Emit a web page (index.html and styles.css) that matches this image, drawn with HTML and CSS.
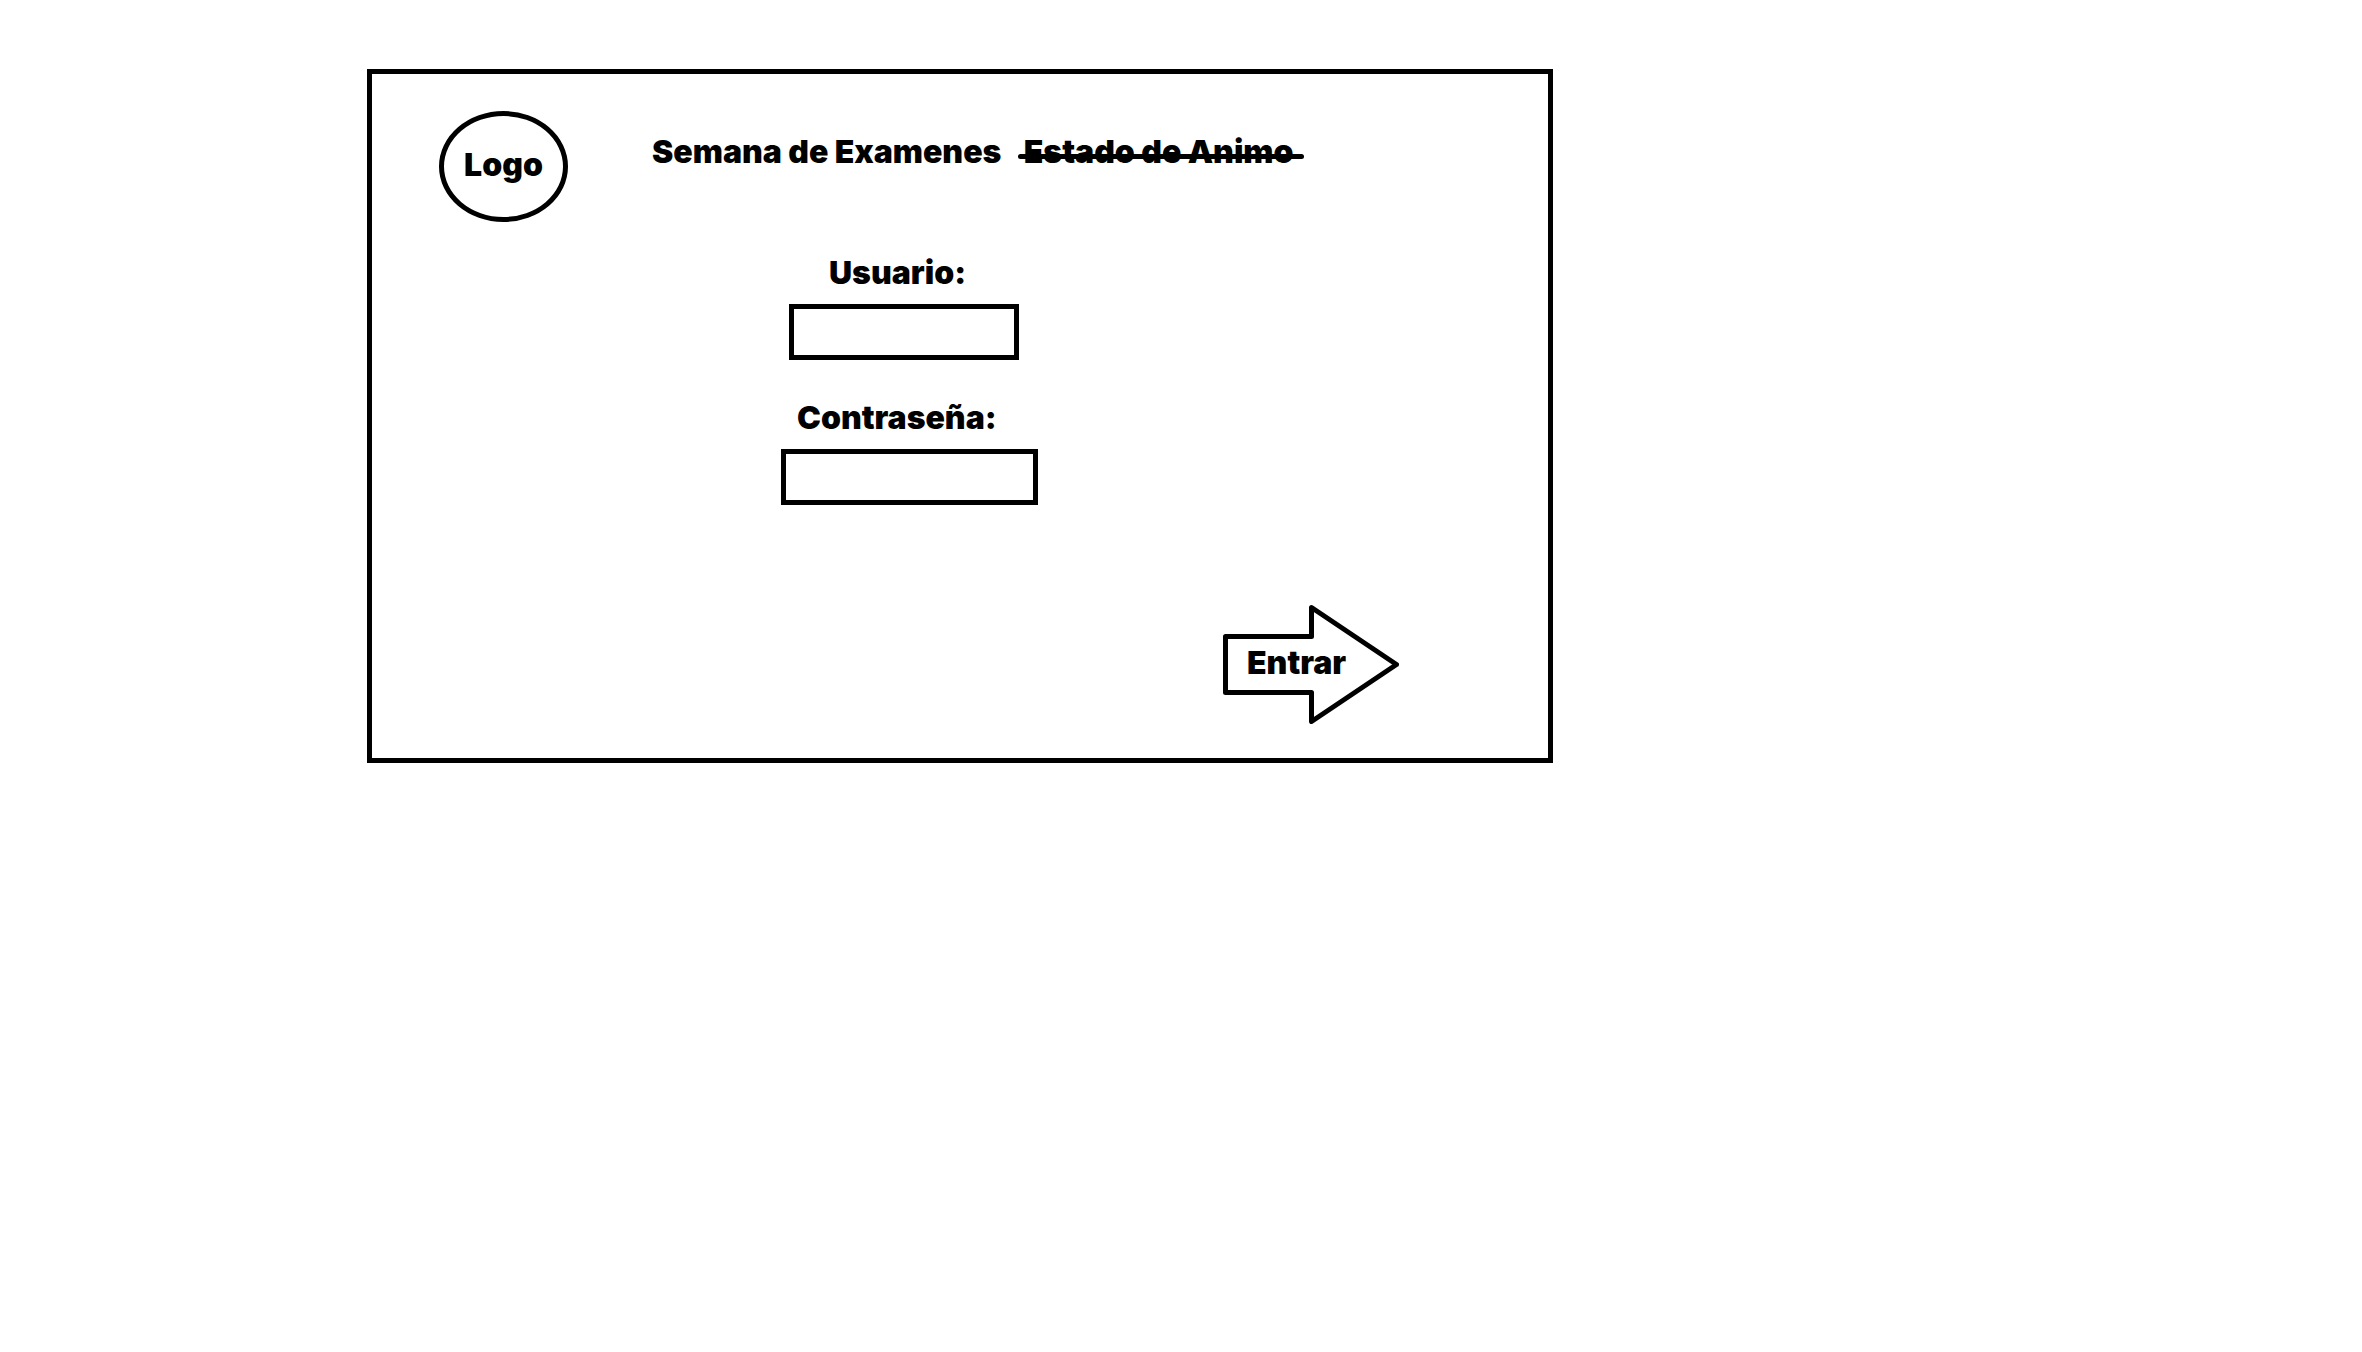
FILE: index.html
```html
<!DOCTYPE html>
<html lang="es">
<head>
<meta charset="utf-8">
<meta name="viewport" content="width=device-width, initial-scale=1">
<title>Semana de Examenes</title>
<link rel="stylesheet" href="styles.css">
</head>
<body>
<main class="screen">
  <header class="header">
    <div class="logo">Logo</div>
    <h1 class="title">Semana de Examenes <s class="struck">Estado de Animo</s></h1>
  </header>
  <form class="login">
    <div class="field field-user">
      <label class="label" for="usuario">Usuario:</label>
      <input class="input" id="usuario" type="text">
    </div>
    <div class="field field-password">
      <label class="label" for="contrasena">Contraseña:</label>
      <input class="input" id="contrasena" type="password">
    </div>
    <button class="enter" type="submit">
      <svg class="arrow" viewBox="0 0 176 119" aria-hidden="true">
        <path d="M2.5 31.5H88.5V2.5L173.5 59.5L88.5 116.5V87.5H2.5Z" fill="none" stroke="#000" stroke-width="5" stroke-linejoin="round"/>
      </svg>
      <span class="enter-text">Entrar</span>
    </button>
  </form>
</main>
</body>
</html>
```
FILE: styles.css
```css
* {
  box-sizing: border-box;
}

body {
  margin: 0;
  padding-top: 69px;
  display: grid;
  grid-template-columns: 367fr 1186fr 809fr;
  background: #fff;
  color: #000;
  font: 900 32px/40px Inter, "Liberation Sans", sans-serif;
}

.screen {
  grid-column: 2;
  border: 5px solid #000;
  padding: 37px 0 34px;
}

.header {
  display: flex;
  gap: 84px;
  padding-left: 67px;
}

.logo {
  display: flex;
  align-items: center;
  justify-content: center;
  width: 129px;
  height: 111px;
  padding-bottom: 4px;
  border: 5px solid #000;
  border-radius: 50%;
}

.title {
  margin: 0;
  padding-top: 21px;
  font: inherit;
}

.struck {
  position: relative;
  margin-left: 16px;
  text-decoration: none;
}

.struck::after {
  content: "";
  position: absolute;
  left: -6px;
  right: -10px;
  top: 22px;
  height: 5px;
  border-radius: 3px;
  background: #000;
}

.login {
  display: flex;
  flex-direction: column;
  padding: 31px 149px 0 409px;
}

.field {
  display: flex;
  flex-direction: column;
  gap: 11px;
  margin-bottom: 38px;
}

.field-user {
  padding-left: 8px;
}

.field-user .label {
  padding-left: 40px;
}

.field-password .label {
  padding-left: 16px;
}

.input {
  width: 230px;
  height: 56px;
  padding: 0 12px;
  border: 5px solid #000;
  border-radius: 0;
  background: #fff;
  color: inherit;
  font: inherit;
}

.field-password .input {
  width: 257px;
}

.enter {
  position: relative;
  align-self: flex-end;
  display: flex;
  align-items: center;
  width: 176px;
  height: 119px;
  margin-top: 62px;
  padding: 0 0 4px 24px;
  border: 0;
  background: none;
  color: inherit;
  font: inherit;
  cursor: pointer;
}

.arrow {
  position: absolute;
  inset: 0;
}
```
